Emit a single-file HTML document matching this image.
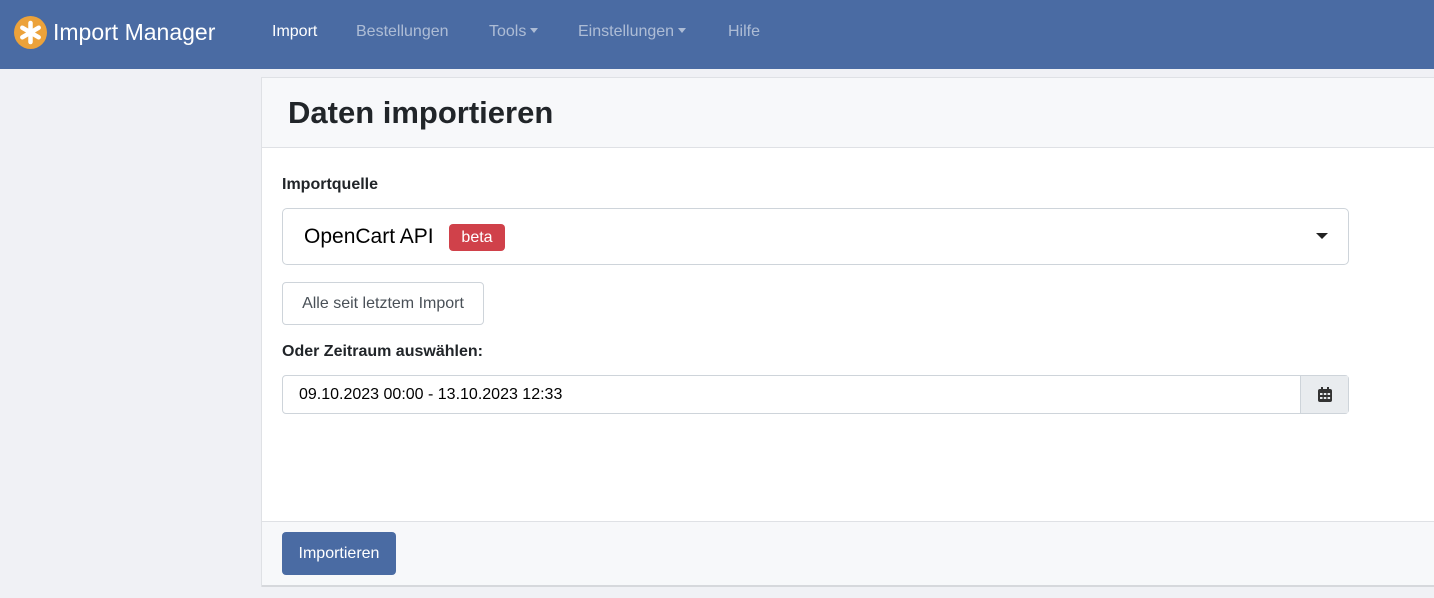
<!DOCTYPE html>
<html><head><style>
*{box-sizing:border-box;margin:0;padding:0}
body{width:1434px;height:598px;overflow:hidden;background:#f0f1f5;font-family:"Liberation Sans",sans-serif;color:#212529;position:relative}
.nav{position:absolute;left:0;top:0;width:1434px;height:69px;background:#4a6ba3}
.logo{position:absolute;left:14px;top:16px;width:33px;height:33px;border-radius:50%;background:#eca23a}
.brand{position:absolute;left:53px;top:19px;font-size:23px;color:#fff}
.nl{position:absolute;top:23px;font-size:16px;color:rgba(255,255,255,.55)}
.caret{display:inline-block;border-left:4.5px solid transparent;border-right:4.5px solid transparent;border-top:5px solid currentColor;vertical-align:3px;margin-left:4px}
.card{position:absolute;left:261px;top:77px;width:1180px;height:510px;background:#fff;border:1px solid #dfe1e5}
.hd{height:70px;background:#f7f8fa;border-bottom:1px solid #dfe1e5;padding:17px 26px;font-size:31px;font-weight:bold}
.ft{position:absolute;left:0;top:443px;width:100%;height:66px;background:#f7f8fa;border-top:1px solid #dfe1e5;border-bottom:2px solid #d6d8dc}
.lbl{position:absolute;font-size:16px;font-weight:bold}
</style></head><body>
<div class="nav">
<div class="logo"><svg width="33" height="33" viewBox="0 0 33 33"><g stroke="#fff" stroke-width="4.5" stroke-linecap="round"><line x1="16.5" y1="7" x2="16.5" y2="26"/><line x1="8.3" y1="11.7" x2="24.7" y2="21.3"/><line x1="8.3" y1="21.3" x2="24.7" y2="11.7"/></g></svg></div>
<div class="brand">Import Manager</div>
<div class="nl" style="left:272px;color:#fff">Import</div>
<div class="nl" style="left:356px">Bestellungen</div>
<div class="nl" style="left:489px">Tools<span class="caret"></span></div>
<div class="nl" style="left:578px">Einstellungen<span class="caret"></span></div>
<div class="nl" style="left:728px">Hilfe</div>
</div>
<div class="card">
<div class="hd">Daten importieren</div>
<div class="ft"><div style="position:absolute;left:20px;top:10px;width:114px;height:43px;background:#4a6ba3;color:#fff;border-radius:4px;font-size:16px;text-align:center;line-height:43px">Importieren</div></div>
</div>
<div class="lbl" style="left:282px;top:176px">Importquelle</div>
<div style="position:absolute;left:282px;top:208px;width:1067px;height:57px;border:1px solid #ced4da;border-radius:5px;background:#fff">
<span style="position:absolute;left:21px;top:16px;font-size:21px;color:#000">OpenCart API</span>
<span style="position:absolute;left:166px;top:15px;height:27px;width:56px;background:#d0414a;color:#fff;border-radius:4px;font-size:16px;text-align:center;line-height:27px">beta</span>
<span style="position:absolute;right:20px;top:24px;border-left:6px solid transparent;border-right:6px solid transparent;border-top:6px solid #222"></span>
</div>
<div style="position:absolute;left:282px;top:282px;width:202px;height:43px;border:1px solid #ced4da;border-radius:4px;font-size:16px;text-align:center;line-height:41px;color:#495057">Alle seit letztem Import</div>
<div class="lbl" style="left:282px;top:343px">Oder Zeitraum auswählen:</div>
<div style="position:absolute;left:282px;top:375px;width:1067px;height:39px;border:1px solid #ced4da;border-radius:4px;background:#fff">
<span style="position:absolute;left:16px;top:10px;font-size:16px;color:#000">09.10.2023 00:00 - 13.10.2023 12:33</span>
<div style="position:absolute;right:0;top:0;width:48px;height:37px;background:#e9ecef;border-left:1px solid #ced4da">
<svg width="14" height="15" viewBox="0 0 14 15" style="position:absolute;left:17px;top:11px"><rect x="3" y="0" width="2" height="3" fill="#333"/><rect x="9" y="0" width="2" height="3" fill="#333"/><rect x="0" y="2" width="14" height="13" rx="2" fill="#333"/><g fill="#e9ecef"><rect x="2" y="6" width="2.5" height="2"/><rect x="5.8" y="6" width="2.5" height="2"/><rect x="9.6" y="6" width="2.5" height="2"/><rect x="2" y="10" width="2.5" height="2"/><rect x="5.8" y="10" width="2.5" height="2"/><rect x="9.6" y="10" width="2.5" height="2"/></g></svg>
</div></div>
</body></html>
